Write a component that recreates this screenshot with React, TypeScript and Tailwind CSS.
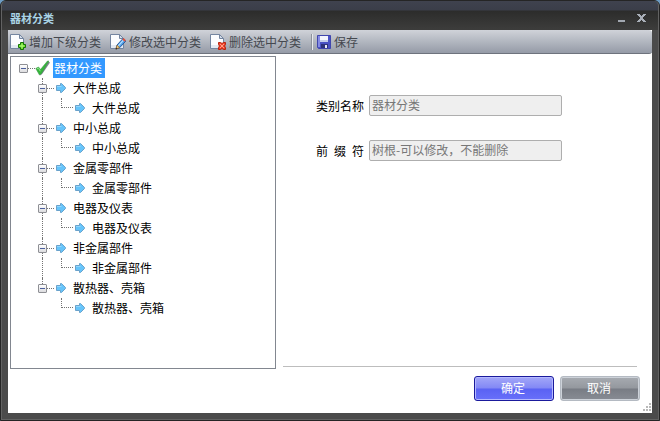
import { useState } from "react";
import type { ReactElement, ReactNode } from "react";

type Category = {
  name: string;
  children?: Category[];
};

const categories: Category[] = [
  { name: "大件总成", children: [{ name: "大件总成" }] },
  { name: "中小总成", children: [{ name: "中小总成" }] },
  { name: "金属零部件", children: [{ name: "金属零部件" }] },
  { name: "电器及仪表", children: [{ name: "电器及仪表" }] },
  { name: "非金属部件", children: [{ name: "非金属部件" }] },
  { name: "散热器、壳箱", children: [{ name: "散热器、壳箱" }] }
];

const PageIcon = ({ children }: { children: ReactNode }): ReactElement => (
  <svg width="16" height="16" viewBox="0 0 16 16" aria-hidden="true" className="shrink-0">
    <path d="M.5.5h9l4 4v10H.5z" fill="#fbfcfe" stroke="#7485a0" />
    <path d="M1 11v3h12v-3z" fill="#e3e9f2" />
    <path d="M9.500.500v4h4z" fill="#d5deeb" stroke="#7485a0" strokeLinejoin="round" />
    {children}
  </svg>
);

const AddIcon = (): ReactElement => (
  <PageIcon>
    <path d="M10.500 8.500h3v2h2v3h-2v2h-3v-2h-2v-3h2z" fill="#5fdc1e" stroke="#157307" />
    <path d="M11.500 9.500h1v5h-1zM9.500 11.500h5v1h-5z" fill="#b5f77e" />
  </PageIcon>
);

const EditIcon = (): ReactElement => (
  <PageIcon>
    <path d="M6 15l1-4 6-6.500 2.800 2.600-6.300 6.700z" fill="#4fa0ea" stroke="#1d5196" strokeWidth=".9" />
    <path d="M8.300 11.800L13.500 6.200" stroke="#b8e1ff" strokeWidth="1.200" />
    <path d="M12.300 5.400l1.300-1.300 2.300 2.200-1.300 1.400z" fill="#e2513a" />
    <path d="M6 15l1-3.800 2.500 2.400z" fill="#f2cf8c" stroke="#a0691d" strokeWidth=".7" />
    <path d="M5.600 15.500l.6-2 1.400 1.300z" fill="#3a2a1a" />
  </PageIcon>
);

const DeleteIcon = (): ReactElement => (
  <PageIcon>
    <path d="M8.500 8.500h2l1.500 1 1.500-1h2v2L14.500 12l1 1.500v2h-2l-1.500-1-1.500 1h-2v-2l1-1.500-1-1.500z" fill="#f0432b" stroke="#b8230f" />
    <path d="M10 10l4 4M14 10l-4 4" stroke="#ff9f88" />
  </PageIcon>
);

const SaveIcon = (): ReactElement => (
  <svg width="14" height="14" viewBox="0 0 14 14" aria-hidden="true" className="shrink-0">
    <path d="M.5.5h13v13h-12l-1-1z" fill="#4a52c4" stroke="#4046ae" />
    <path d="M1 1h2v11H1z" fill="#858be4" />
    <path d="M3 1h8v6H3z" fill="#f3f5fd" />
    <path d="M3 5h8v2H3z" fill="#c4cdea" />
    <path d="M4 9h7v4H4z" fill="#2d327a" />
    <path d="M8 10h2v3H8z" fill="#e7eaf6" />
  </svg>
);

const CheckIcon = (): ReactElement => (
  <svg width="16" height="16" viewBox="0 0 16 16" aria-hidden="true" className="shrink-0">
    <path d="M5 14.500L13 1.500l2 1L7.500 13.500 5.500 15.500z" fill="#7d838d" />
    <path d="M.8 8.500L3.500 7 5.500 9.500 12.500 1h1.300L6.500 13.500 4.500 15z" fill="#35b53b" stroke="#3a9a44" strokeWidth=".6" />
    <path d="M2 8.800l1.500-.6 1.800 3" stroke="#8fe68b" fill="none" />
  </svg>
);

const ArrowIcon = (): ReactElement => (
  <svg width="16" height="16" viewBox="0 0 16 16" aria-hidden="true" className="shrink-0">
    <path d="M2.500 5.500H6.500V3.500H7.500L11.500 7.500V8.500L7.500 12.500H6.500V10.500H2.500z" fill="#66c4fa" stroke="#6aa2cb" />
    <path d="M3 6.500h4.500" stroke="#93d8ff" />
  </svg>
);

type ExpanderProps = {
  name: string;
  open: boolean;
  above?: boolean;
  below?: boolean;
  onToggle: () => void;
};

const Expander = ({ name, open, above, below, onToggle }: ExpanderProps): ReactElement => (
  <div className="flex h-5 w-4 shrink-0 items-center">
    <div className="flex h-5 w-[9px] flex-col">
      <span className={`ml-1 h-[6px] border-l border-dotted ${above ? "border-neutral-500" : "border-transparent"}`} />
      <button
        type="button"
        aria-label={name}
        aria-expanded={open}
        onClick={onToggle}
        className="flex h-[9px] w-[9px] items-center justify-center rounded-[1px] border border-[#8e8f94] bg-linear-to-b from-white to-[#dcdcdf]"
      >
        <svg width="5" height="5" viewBox="0 0 5 5" aria-hidden="true">
          <path d={open ? "M0 2h5v1H0z" : "M0 2h5v1H0zM2 0h1v5H2z"} fill="#4b5f9c" />
        </svg>
      </button>
      <span className={`ml-1 grow border-l border-dotted ${below ? "border-neutral-500" : "border-transparent"}`} />
    </div>
    <span className="grow border-t border-dotted border-neutral-500" />
  </div>
);

type LabelProps = {
  name: string;
  selected: boolean;
  onSelect: () => void;
};

const TreeLabel = ({ name, selected, onSelect }: LabelProps): ReactElement => (
  <button
    type="button"
    onClick={onSelect}
    className={`ml-[2px] h-5 pr-[3px] pl-px whitespace-nowrap ${selected ? "bg-[#3399ff] text-white" : "text-black"}`}
  >
    {name}
  </button>
);

const CategoryTree = (): ReactElement => {
  const [closed, setClosed] = useState<string[]>([]);
  const [selected, setSelected] = useState("root");

  const toggle = (id: string) => {
    setClosed(ids => ids.includes(id) ? ids.filter(i => i !== id) : [...ids, id]);
  };

  const rootOpen = !closed.includes("root");

  return (
    <div className="mb-11 w-2/5 max-w-[266px] shrink-0 grow overflow-auto border border-[#828790] bg-white py-[1px] pl-2">
      <div className="flex h-5 items-center">
        <Expander name="器材分类" open={rootOpen} onToggle={() => toggle("root")} />
        <CheckIcon />
        <TreeLabel name="器材分类" selected={selected === "root"} onSelect={() => setSelected("root")} />
      </div>

      {rootOpen && (
        <ul className="pl-[19px]">
          {categories.map(({ name, children }, index) => {
            const last = index === categories.length - 1;
            const open = !closed.includes(name);

            return (
              <li key={name}>
                <div className="flex h-5 items-center">
                  <Expander name={name} open={open} above below={!last} onToggle={() => toggle(name)} />
                  <ArrowIcon />
                  <TreeLabel name={name} selected={selected === name} onSelect={() => setSelected(name)} />
                </div>

                {open && (
                  <ul className={`ml-1 border-l border-dotted pl-[14px] ${last ? "border-transparent" : "border-neutral-500"}`}>
                    {children?.map(child => (
                      <li key={child.name} className="flex h-5 items-center">
                        <span className="ml-1 h-[10px] w-3 shrink-0 self-start border-b border-l border-dotted border-neutral-500" />
                        <ArrowIcon />
                        <TreeLabel
                          name={child.name}
                          selected={selected === `${name}/${child.name}`}
                          onSelect={() => setSelected(`${name}/${child.name}`)}
                        />
                      </li>
                    ))}
                  </ul>
                )}
              </li>
            );
          })}
        </ul>
      )}
    </div>
  );
};

const ToolButton = ({ icon, children }: { icon: ReactElement; children: string }): ReactElement => (
  <button type="button" className="flex items-center gap-[3px] whitespace-nowrap text-[#45484f]">
    {icon}
    {children}
  </button>
);

const Field = ({ id, label, value }: { id: string; label: string; value: string }): ReactElement => (
  <div className="flex items-center gap-[5px]">
    <label htmlFor={id} className="w-12 shrink-0 [text-align-last:justify] text-black">{label}</label>
    <input
      id={id}
      defaultValue={value}
      disabled
      className="h-[21px] w-full max-w-[193px] rounded-[2px] border border-[#aeaeae] bg-[#efefef] px-[2px] pb-[2px] text-[#777777]"
    />
  </div>
);

const App = (): ReactElement => {
  return (
    <div className="bg-[#6d9cc4]">
      <div className="flex min-h-screen flex-col rounded-t-[6px] border border-[#252525] bg-[#4b4b4b] text-[12px] leading-5 font-[Noto_Sans_CJK_SC,sans-serif]">
        <div className="flex grow flex-col rounded-t-[5px] border border-t-0 border-[#626262] bg-[#4b4b4b]">
          <header className="flex h-[29px] shrink-0 items-center justify-between rounded-t-[5px] bg-[linear-gradient(to_bottom,#3f424e_0px,#3b3e49_9px,#2c2c2b_10px,#3c3c3b_28px)] pt-1 pr-3 pl-2">
            <h1 className="text-[11px] font-bold text-[#a9d3e4]">器材分类</h1>
            <div className="flex items-center gap-[11px]">
              <button type="button" aria-label="最小化">
                <svg width="8" height="8" viewBox="0 0 8 8" aria-hidden="true">
                  <path d="M0 6h7v2H0z" fill="#a1a7b0" />
                </svg>
              </button>
              <button type="button" aria-label="关闭">
                <svg width="9" height="8" viewBox="0 0 9 8" aria-hidden="true">
                  <path d="M0 0h3v1h1v1h1V1h1V0h3v1H8v1H7v1H6v2h1v1h1v1h1v1H6V7H5V6H4v1H3v1H0V7h1V6h1V5h1V3H2V2H1V1H0z" fill="#a9afb8" />
                </svg>
              </button>
            </div>
          </header>

          <div className="mx-[6px] mb-[6px] flex grow flex-col bg-white">
            <div className="flex h-6 shrink-0 items-center rounded-r-[3px] border-b border-[#6e737d] bg-linear-to-b from-[#d0d3d9] to-[#959ba7] pl-[2px]">
              <div className="flex items-center gap-[9px]">
                <ToolButton icon={<AddIcon />}>增加下级分类</ToolButton>
                <ToolButton icon={<EditIcon />}>修改选中分类</ToolButton>
                <ToolButton icon={<DeleteIcon />}>删除选中分类</ToolButton>
              </div>
              <span className="mr-1 ml-[10px] h-4 w-[2px] border-r border-l border-r-[#e8eaee] border-l-[#8d929c]" />
              <ToolButton icon={<SaveIcon />}>保存</ToolButton>
            </div>

            <main className="flex grow pt-[2px] pl-[2px]">
              <CategoryTree />

              <div className="flex min-w-0 grow flex-col pl-[7px]">
                <form className="flex grow flex-col gap-6 pt-[39px] pr-4 pl-[33px]">
                  <Field id="category-name" label="类别名称" value="器材分类" />
                  <Field id="category-prefix" label="前 缀 符" value="树根-可以修改，不能删除" />
                </form>

                <hr className="mr-[15px] border-[#bdbdbd]" />

                <div className="mt-[9px] mr-3 flex justify-end gap-[6px] text-white">
                  <button type="button" className="h-[25px] w-20 rounded-[3px] border border-[#1a1a9c] bg-[linear-gradient(to_bottom,#a3a7f8_0%,#8288f5_48%,#5a62f3_52%,#6870fa_100%)] pr-[2px] pb-[2px] inset-ring inset-ring-[#b5b9ff]">
                    确定
                  </button>
                  <button type="button" className="h-[25px] w-20 rounded-[3px] border border-[#b4bac2] bg-[linear-gradient(to_bottom,#a7abb1_0%,#94989e_48%,#787c84_52%,#888c94_100%)] pr-[2px] pb-[2px] inset-ring inset-ring-[#cdd2d9]">
                    取消
                  </button>
                </div>

                <div className="mt-[2px] flex justify-end pr-px pb-px">
                  <svg width="9" height="9" viewBox="0 0 9 9" aria-hidden="true">
                    <path d="M7 0h2v2H7zM4 3h2v2H4zM7 3h2v2H7zM1 6h2v2H1zM4 6h2v2H4zM7 6h2v2H7z" fill="#b9b9b9" />
                  </svg>
                </div>
              </div>
            </main>
          </div>
        </div>
      </div>
    </div>
  );
};

export default App;
